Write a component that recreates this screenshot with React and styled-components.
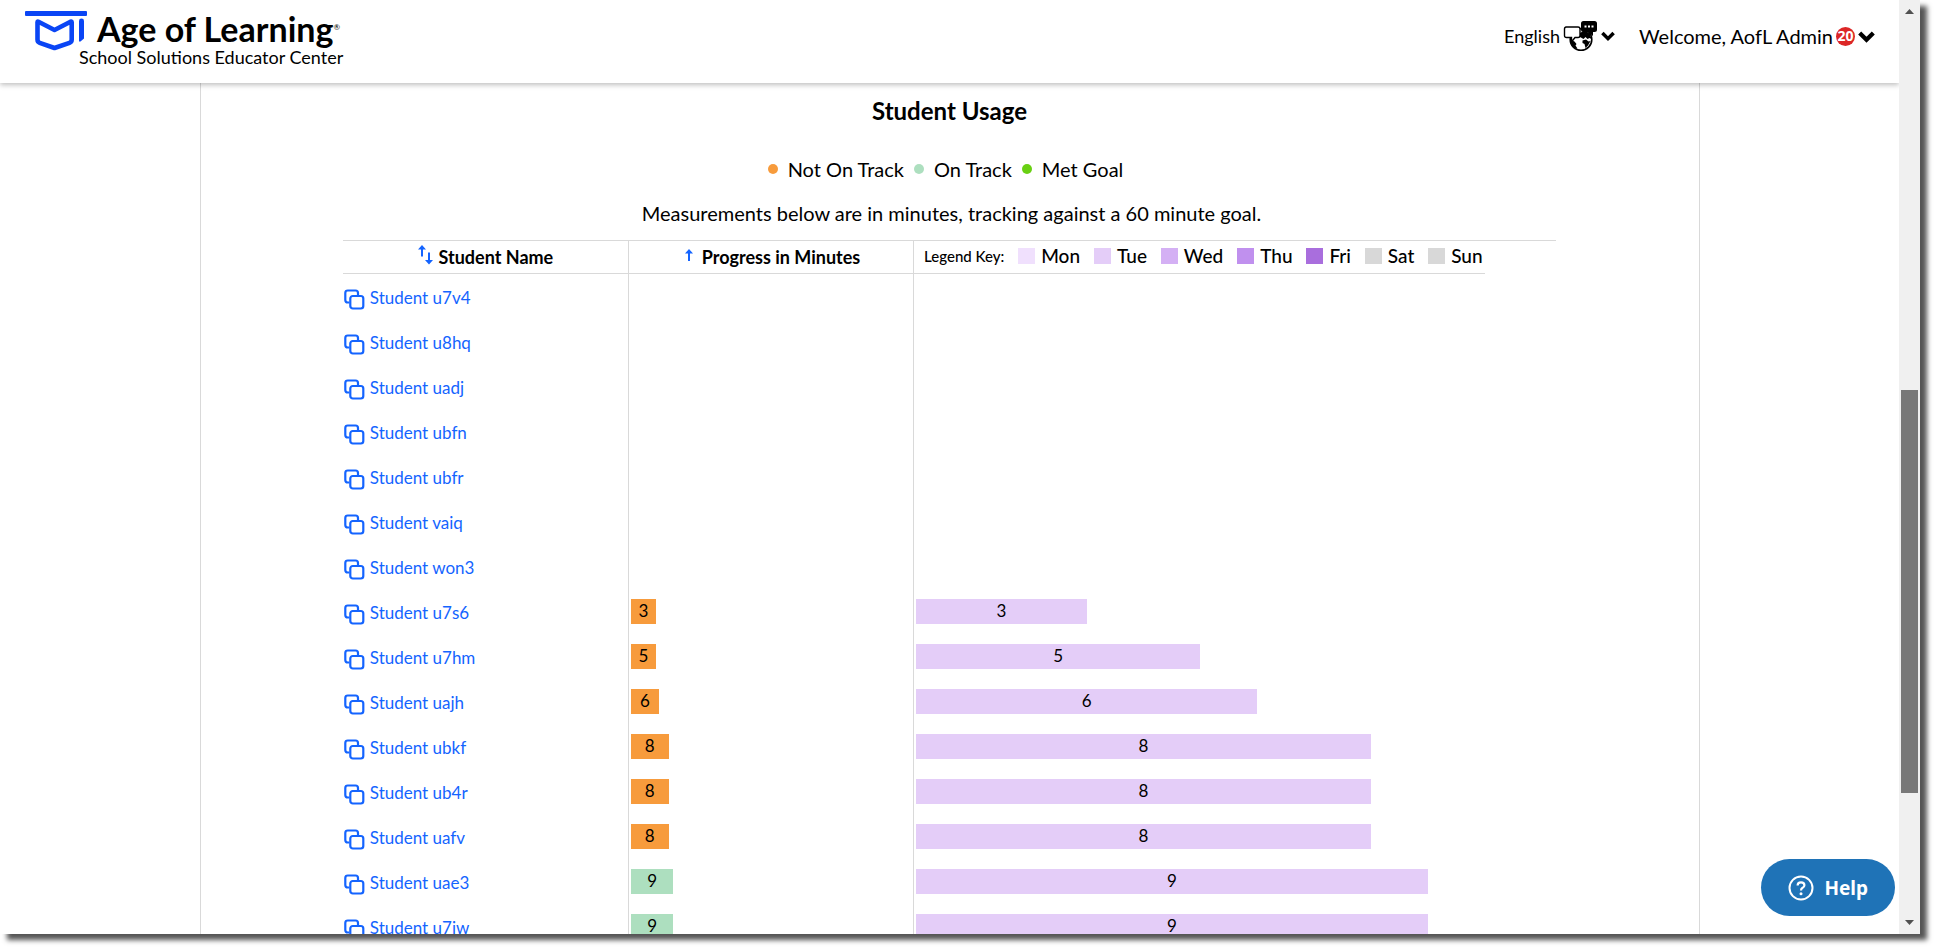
import React from 'react';
import styled, { createGlobalStyle } from 'styled-components';

const GlobalStyle = createGlobalStyle`
    * {
        box-sizing: border-box;
    }
    body {
        background-color: #fff;
        color: #000;
        font-family: "Lato", sans-serif;
        font-size: 18px;
        margin: 0;
    }
`

const Screen = styled.div`
    height: 100vh;
    overflow: hidden;
    padding: 0 15px 15px 0;
`

const Frame = styled.div`
    background-color: #fff;
    box-shadow: 7px 6px 5px 0 #555;
    display: flex;
    height: 100%;
`

const Page = styled.div`
    display: flex;
    flex: 1;
    flex-direction: column;
    min-width: 0;
    overflow: hidden;
    position: relative;
`

const Header = styled.header`
    align-items: flex-start;
    background-color: #fff;
    box-shadow: 0 2px 5px rgba(0, 0, 0, 0.25);
    display: flex;
    flex-shrink: 0;
    height: 83px;
    justify-content: space-between;
    padding: 10px 24px;
    z-index: 1;
`

const Brand = styled.a`
    color: #000;
    display: grid;
    grid-template-columns: 55px 18px auto;
    text-decoration: none;
`

const LogoMark = styled.svg`
    grid-column: 1 / 3;
    grid-row: 1 / 3;
    height: 42px;
    width: 64px;
`

const BrandName = styled.span`
    font-size: 34px;
    font-weight: 700;
    grid-column: 3;
    grid-row: 1;
    line-height: 38px;
    white-space: nowrap;

    sup {
        font-size: 8px;
        font-weight: 400;
        line-height: 8px;
        vertical-align: 12px;
    }
`

const BrandSub = styled.span`
    font-size: 18px;
    grid-column: 2 / 4;
    grid-row: 2;
    line-height: 18px;
    white-space: nowrap;
`

const Nav = styled.nav`
    align-items: center;
    display: flex;
    gap: 24px;
    height: 52px;
`

const NavButton = styled.button`
    align-items: center;
    background: none;
    border: 0;
    color: #000;
    cursor: pointer;
    display: flex;
    font-family: inherit;
    font-size: ${({ $large }) => ($large ? 20 : 18)}px;
    gap: 3px;
    padding: 0;
    white-space: nowrap;
`

const Badge = styled.span`
    background-color: #dc2626;
    border-radius: 50%;
    color: #fff;
    font-family: "Noto Sans", sans-serif;
    font-size: 14px;
    font-weight: 700;
    height: 19px;
    line-height: 17px;
    text-align: center;
    width: 19px;
`

const Panel = styled.main`
    align-items: center;
    border: 1px solid #d9d9d9;
    border-width: 0 1px;
    display: flex;
    flex: 1;
    flex-direction: column;
    margin: 0 auto;
    max-width: 1500px;
    min-height: 0;
    overflow: hidden;
    padding-top: 12px;
    width: 100%;
`

const Title = styled.h2`
    flex-shrink: 0;
    font-size: 24px;
    font-weight: 700;
    line-height: 32px;
    margin: 0;
`

const StatusList = styled.ul`
    display: flex;
    flex-shrink: 0;
    gap: 10px;
    line-height: 28px;
    list-style: none;
    margin: 28px 8px 0 0;
    padding: 0;
`

const Status = styled.li`
    align-items: center;
    display: flex;
    font-size: 20px;
    gap: 10px;

    &::before {
        background-color: ${({ $color }) => $color};
        border-radius: 50%;
        content: "";
        height: 10px;
        width: 10px;
    }
`

const Note = styled.p`
    flex-shrink: 0;
    font-size: 20px;
    line-height: 28px;
    margin: 16px 0 13px;
    padding-left: 4px;
`

const UsageTable = styled.table`
    border-spacing: 0;
    border-top: 1px solid #d9d9d9;
    flex-shrink: 0;
    table-layout: fixed;
    width: 81%;
`

const Col = styled.col`
    width: ${({ $width }) => $width};
`

const HeadCell = styled.th`
    border-bottom: 1px solid #d9d9d9;
    border-left: ${({ $line }) => ($line ? '1px solid #d9d9d9' : 0)};
    height: 33px;
    padding: 0;
`

const SortButton = styled.button`
    align-items: center;
    background: none;
    border: 0;
    cursor: pointer;
    display: flex;
    font-family: inherit;
    font-size: 18px;
    font-weight: 700;
    gap: 6px;
    height: 32px;
    justify-content: center;
    line-height: 32px;
    padding: 0;
    width: 100%;
`

const LegendKey = styled.div`
    align-items: center;
    display: flex;
    height: 32px;
    justify-content: space-between;
    line-height: 28px;
    padding: 0 2px 2px 10px;
`

const LegendLabel = styled.span`
    font-size: 15px;
    font-weight: 500;
`

const Day = styled.span`
    align-items: center;
    display: flex;
    font-size: 19px;
    font-weight: 500;
    gap: 6px;

    &::before {
        background-color: ${({ $color }) => $color};
        content: "";
        height: 16px;
        width: 17px;
    }
`

const Cell = styled.td`
    border-left: ${({ $line }) => ($line ? '1px solid #d9d9d9' : 0)};
    height: 45px;
    padding: ${({ $line }) => ($line ? '0 0 0 2px' : '2px 0 0 1px')};
`

const StudentLink = styled.a`
    align-items: flex-end;
    color: #1464ff;
    display: flex;
    font-size: 17px;
    gap: 5px;
    line-height: 24px;
    text-decoration: none;
`

const Bar = styled.div`
    background-color: ${({ $color }) => $color};
    font-size: 17px;
    height: 25px;
    line-height: 24px;
    min-width: 25px;
    text-align: center;
`

const HelpButton = styled.button`
    align-items: center;
    background-color: #1f73b7;
    border: 0;
    border-radius: 29px;
    bottom: 18px;
    color: #fff;
    cursor: pointer;
    display: flex;
    font-family: "Noto Sans", sans-serif;
    font-size: 19px;
    font-weight: 700;
    gap: 10px;
    height: 57px;
    padding: 0 27px;
    position: absolute;
    right: 4px;
    z-index: 2;
`

const Scrollbar = styled.div`
    align-items: center;
    background-color: #f0f0f0;
    display: flex;
    flex-direction: column;
    padding: 9px 0;
    width: 21px;
`

const Track = styled.div`
    display: grid;
    flex: 1;
    grid-template-rows: 83fr 89fr 28fr;
    padding: 0 2px;
    width: 100%;
`

const Thumb = styled.div`
    background-color: #787878;
    grid-row: 2;
`

const statuses = [
    { label: 'Not On Track', color: '#f79b3c' },
    { label: 'On Track', color: '#addfbf' },
    { label: 'Met Goal', color: '#69d013' },
];

const days = [
    { label: 'Mon', color: '#f0e0fd' },
    { label: 'Tue', color: '#e4cdf8' },
    { label: 'Wed', color: '#d4b0f4' },
    { label: 'Thu', color: '#c090ee' },
    { label: 'Fri', color: '#a96edd' },
    { label: 'Sat', color: '#d8d8d8' },
    { label: 'Sun', color: '#d8d8d8' },
];

const students = [
    { id: 'u7v4', minutes: 0 },
    { id: 'u8hq', minutes: 0 },
    { id: 'uadj', minutes: 0 },
    { id: 'ubfn', minutes: 0 },
    { id: 'ubfr', minutes: 0 },
    { id: 'vaiq', minutes: 0 },
    { id: 'won3', minutes: 0 },
    { id: 'u7s6', minutes: 3 },
    { id: 'u7hm', minutes: 5 },
    { id: 'uajh', minutes: 6 },
    { id: 'ubkf', minutes: 8 },
    { id: 'ub4r', minutes: 8 },
    { id: 'uafv', minutes: 8 },
    { id: 'uae3', minutes: 9 },
    { id: 'u7iw', minutes: 9 },
];

const GOAL = 60;
const DAILY_MAX = 10;

const Chevron = ({ width }) => (
    <svg width={width} height={width} viewBox="0 0 16 16" aria-hidden="true">
        <path d="M1.6 4.6 8 11l6.4-6.4" fill="none" stroke="#000" strokeWidth="4" />
    </svg>
);

const Logo = () => (
    <LogoMark viewBox="0 0 64 42" aria-hidden="true">
        <rect x="1" y="1" width="62" height="5" rx="1" fill="#0a45f5" />
        <path
            d="M13.5 12.2 Q13.500 11.200 14.500 11.700 L30.500 20 L46.500 11.700 Q47.700 11.200 47.700 12.200 V29.500 Q47.700 32 45.500 32.800 L30.500 38 L15.700 32.800 Q13.500 32 13.500 29.500 Z"
            fill="none"
            stroke="#0a45f5"
            strokeWidth="4.6"
            strokeLinejoin="round"
        />
        <path d="M55 11 Q55 8.600 57.500 8.600 Q60 8.600 60 11 V28.500 L56.500 31.500 H55 Z" fill="#0a45f5" />
    </LogoMark>
);

const LanguageIcon = () => (
    <svg width="35" height="31" viewBox="0 0 35 31" aria-hidden="true">
        <circle cx="18" cy="18.500" r="10.800" fill="#fff" stroke="#000" strokeWidth="1.600" />
        <path d="M8 19 L11.500 20.500 L13.500 23 L12.500 24.500 L14.500 27.500 L12 27.500 Q8 24.500 8 19 Z" fill="#000" />
        <path d="M17 12 L22 9 L27 13 L28.500 18 L26.500 17 L24.500 18 L22.500 16 L20.500 18 L17 16 Z" fill="#000" />
        <path d="M19.500 19.500 L23 18.500 L25.500 20.500 L27.500 20 L25 24.500 L22.500 27 L21.500 23 L19.500 22 Z" fill="#000" />
        <path d="M2.500 6 H15 Q17 6 17 8 V14.500 Q17 16.500 15 16.500 H12 L8.500 21 V16.500 H3.500 Q1.500 16.500 1.500 14.500 V8 Q1.500 6 3.500 6 Z" fill="#fff" stroke="#000" strokeWidth="1.400" />
        <path d="M20.500 0 H31.500 Q34 0 34 2.500 V8.500 Q34 11 31.500 11 H30 V15 L25 11 H20.500 Q18 11 18 8.500 V2.500 Q18 0 20.500 0 Z" fill="#000" />
        <path d="M21.500 4.500 h2 v2 h-2 z M25 4.500 h2 v2 h-2 z M28.500 4.500 h2 v2 h-2 z" fill="#fff" />
    </svg>
);

const SortIcon = () => (
    <svg width="15" height="24" viewBox="0 0 15 24" aria-hidden="true">
        <path d="M4 11.500 V3 M11 7.500 V16" stroke="#1464ff" strokeWidth="2" />
        <path d="M0 4.500 L4 0 L8 4.500 Z M7 15 L11 19.500 L15 15 Z" fill="#1464ff" />
    </svg>
);

const UpIcon = () => (
    <svg width="14" height="18" viewBox="0 0 14 18" aria-hidden="true">
        <path d="M7 13 V3" stroke="#1464ff" strokeWidth="2" />
        <path d="M3 5.500 L7 1 L11 5.500 Z" fill="#1464ff" />
    </svg>
);

const CopyIcon = () => (
    <svg width="21" height="21" viewBox="0 0 21 21" aria-hidden="true">
        <g fill="none" stroke="#1464ff" strokeWidth="2.200">
            <path d="M5.500 13.500 H3.800 Q1.300 13.500 1.300 11 V4 Q1.300 1.500 3.800 1.500 H11.500 Q14 1.500 14 4 V6" />
            <rect x="6.300" y="7" width="13" height="12.500" rx="2.500" />
        </g>
    </svg>
);

const HelpIcon = () => (
    <svg width="26" height="26" viewBox="0 0 26 26" fill="none" stroke="#fff" aria-hidden="true">
        <circle cx="13" cy="13" r="11.500" strokeWidth="2" />
        <path d="M9.600 10.500 Q9.600 7.300 13 7.300 Q16.400 7.300 16.400 10.200 Q16.400 11.800 14.600 12.800 Q13 13.700 13 15.500" strokeWidth="2.200" />
        <circle cx="13" cy="18.700" r="1.500" fill="#fff" stroke="none" />
    </svg>
);

const StudentRow = ({ id, minutes }) => (
    <tr>
        <Cell>
            <StudentLink href="#">
                <CopyIcon />
                Student {id}
            </StudentLink>
        </Cell>
        <Cell $line>
            {minutes > 0 && (
                <Bar
                    $color={minutes < 9 ? '#f79b3c' : '#addfbf'}
                    style={{ width: `${(minutes / GOAL) * 100}%` }}
                >
                    {minutes}
                </Bar>
            )}
        </Cell>
        <Cell $line>
            {minutes > 0 && (
                <Bar $color="#e4cdf8" style={{ width: `${(minutes / DAILY_MAX) * 100}%` }}>
                    {minutes}
                </Bar>
            )}
        </Cell>
    </tr>
);

const App = () => {
    return (
        <Screen>
            <GlobalStyle />
            <Frame>
                <Page>
                    <Header>
                        <Brand href="#">
                            <Logo />
                            <BrandName>Age of Learning<sup>®</sup></BrandName>
                            <BrandSub>School Solutions Educator Center</BrandSub>
                        </Brand>
                        <Nav>
                            <NavButton type="button">
                                English
                                <LanguageIcon />
                                <Chevron width={14} />
                            </NavButton>
                            <NavButton type="button" $large>
                                Welcome, AofL Admin
                                <Badge>20</Badge>
                                <Chevron width={17} />
                            </NavButton>
                        </Nav>
                    </Header>
                    <Panel>
                        <Title>Student Usage</Title>
                        <StatusList>
                            {statuses.map(({ label, color }) => (
                                <Status key={label} $color={color}>{label}</Status>
                            ))}
                        </StatusList>
                        <Note>Measurements below are in minutes, tracking against a 60 minute goal.</Note>
                        <UsageTable>
                            <colgroup>
                                <Col $width="23.5%" />
                                <Col $width="23.5%" />
                                <Col $width="47.1%" />
                                <Col />
                            </colgroup>
                            <thead>
                                <tr>
                                    <HeadCell>
                                        <SortButton type="button"><SortIcon />Student Name</SortButton>
                                    </HeadCell>
                                    <HeadCell $line>
                                        <SortButton type="button"><UpIcon />Progress in Minutes</SortButton>
                                    </HeadCell>
                                    <HeadCell $line>
                                        <LegendKey>
                                            <LegendLabel>Legend Key:</LegendLabel>
                                            {days.map(({ label, color }) => (
                                                <Day key={label} $color={color}>{label}</Day>
                                            ))}
                                        </LegendKey>
                                    </HeadCell>
                                </tr>
                            </thead>
                            <tbody>
                                {students.map((student) => (
                                    <StudentRow key={student.id} {...student} />
                                ))}
                            </tbody>
                        </UsageTable>
                    </Panel>
                    <HelpButton type="button">
                        <HelpIcon />
                        Help
                    </HelpButton>
                </Page>
                <Scrollbar>
                    <svg width="9" height="5" viewBox="0 0 9 5" aria-hidden="true">
                        <path d="M0 5 L4.500 0 L9 5 Z" fill="#505050" />
                    </svg>
                    <Track>
                        <Thumb />
                    </Track>
                    <svg width="9" height="5" viewBox="0 0 9 5" aria-hidden="true">
                        <path d="M0 0 L4.500 5 L9 0 Z" fill="#505050" />
                    </svg>
                </Scrollbar>
            </Frame>
        </Screen>
    );
};

export default App;
